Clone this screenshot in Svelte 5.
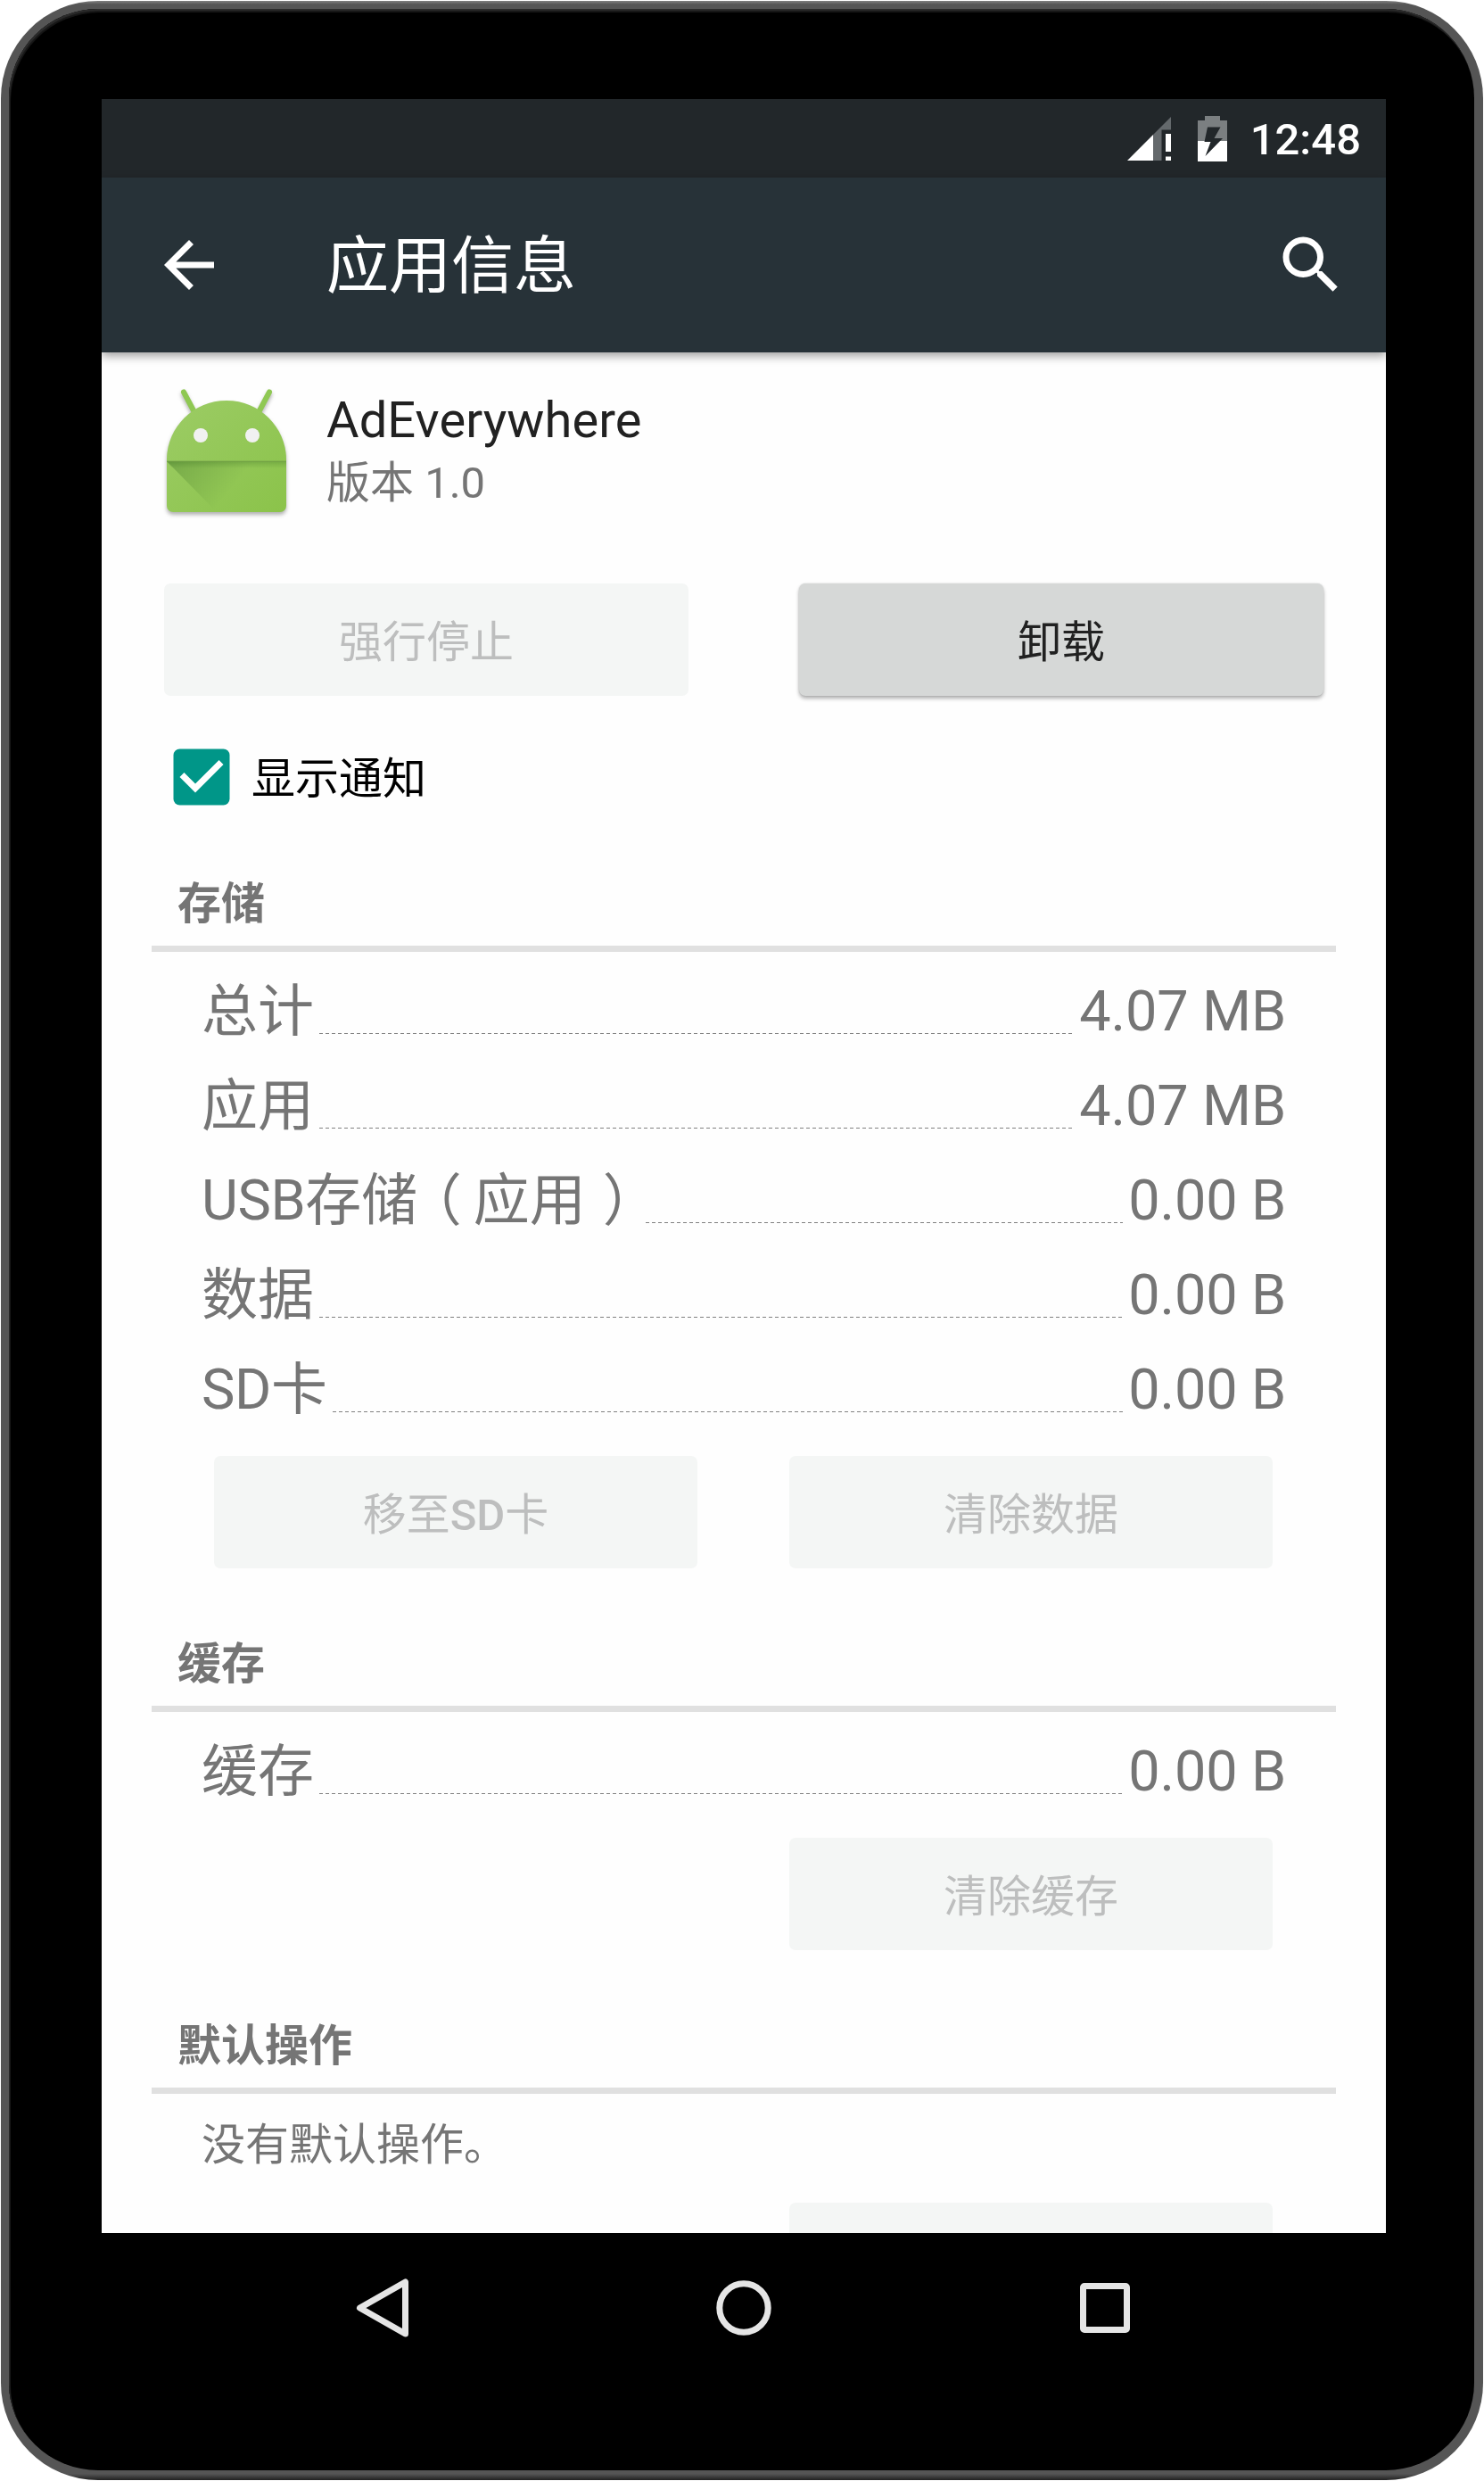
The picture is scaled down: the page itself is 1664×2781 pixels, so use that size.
<script>
  const storage = [
    { label: '总计', value: '4.07 MB' },
    { label: '应用', value: '4.07 MB' },
    { latin: 'USB', label: '存储', note: '应用', value: '0.00 B' },
    { label: '数据', value: '0.00 B' },
    { latin: 'SD', label: '卡', value: '0.00 B' }
  ];
  const cache = [{ label: '缓存', value: '0.00 B' }];
</script>

{#snippet rows(items)}
  {#each items as item}
    <div class="row">
      <span class="label">{#if item.latin}<span class="prefix">{item.latin}</span>{/if}{item.label}{#if item.note}<span class="open">（</span>{item.note}<span class="close">）</span>{/if}</span>
      <span class="leader"></span>
      <span class="value">{item.value}</span>
    </div>
  {/each}
{/snippet}

<div class="device">
  <div class="screen">
    <div class="status">
      <svg class="signal" viewBox="0 0 49 49" aria-hidden="true">
        <path fill="#64696c" d="M49 0V14.5H38.5V49H29V20z" />
        <path fill="#fff" d="M0 49 29 20V49zM43 19h6v20h-6zM43 44.5h6V49h-6z" />
      </svg>
      <svg class="battery" viewBox="0 0 33 51" aria-hidden="true">
        <path fill="#7b7f81" d="M8 0H25V5H33V28H0V5H8z" />
        <path fill="#fff" d="M0 28H33V51H0z" />
        <path fill="#22272a" d="M11 12.5H25.5L18.5 25H28L8.500 45 14.500 29H7.500z" />
      </svg>
      <span class="clock">12:48</span>
    </div>

    <header class="appbar">
      <svg class="icon" viewBox="0 0 24 24" aria-hidden="true">
        <path d="M20 11H7.830l5.590-5.590L12 4l-8 8 8 8 1.410-1.410L7.830 13H20z" />
      </svg>
      <h1>应用信息</h1>
      <svg class="icon" viewBox="0 0 24 24" aria-hidden="true">
        <path d="M15.500 14h-.790l-.280-.270A6.471 6.471 0 0 0 16 9.500 6.500 6.500 0 1 0 9.500 16c1.610 0 3.090-.590 4.230-1.570l.270.280v.790l5 4.990L20.490 19zm-6 0C7.010 14 5 11.990 5 9.500S7.010 5 9.500 5 14 7.010 14 9.500 11.990 14 9.500 14z" />
      </svg>
    </header>

    <main>
      <div class="app">
        <svg class="robot" viewBox="0 0 168 168" aria-hidden="true">
          <defs>
            <linearGradient id="skin" x1="0" y1="0" x2="1" y2="1">
              <stop offset="0" stop-color="#9ccc65" />
              <stop offset="1" stop-color="#8bc34a" />
            </linearGradient>
            <linearGradient id="fold" x1="0" y1="0" x2="1" y2=".35">
              <stop offset="0" stop-color="#33691e" stop-opacity=".34" />
              <stop offset=".65" stop-color="#33691e" stop-opacity="0" />
            </linearGradient>
            <linearGradient id="crease" x1="0" y1="0" x2="0" y2="1">
              <stop offset="0" stop-color="#33691e" stop-opacity=".28" />
              <stop offset="1" stop-color="#33691e" stop-opacity="0" />
            </linearGradient>
          </defs>
          <g class="robot-body">
            <path d="M36 19.500 49 44M132 19.500 119 44" stroke="#8fc853" stroke-width="6" stroke-linecap="round" />
            <path fill="url(#skin)" d="M17 95C17 60 46 29 84 29S151 60 151 95V147a7 7 0 0 1-7 7H24a7 7 0 0 1-7-7z" />
          </g>
          <path fill="url(#fold)" d="M17 97H151V154H73z" />
          <path fill="url(#crease)" d="M17 97H151V105H23z" />
          <path fill="#6f9c45" d="M17 96.500H151V98H17z" opacity=".6" />
          <circle cx="55" cy="68" r="8" fill="#f1f1f1" />
          <circle cx="113" cy="68" r="8" fill="#f1f1f1" />
        </svg>
        <div class="app-text">
          <div class="name">AdEverywhere</div>
          <div class="version">版本 1.0</div>
        </div>
      </div>

      <div class="actions">
        <button disabled>强行停止</button>
        <button class="raised">卸载</button>
      </div>

      <div class="notify">
        <svg viewBox="0 0 24 24" aria-hidden="true">
          <rect x="3" y="3" width="18" height="18" rx="2" fill="#009688" />
          <path fill="#fff" d="M10 17l-5-5 1.410-1.410L10 14.170l7.590-7.590L19 8z" />
        </svg>
        <span>显示通知</span>
      </div>

      <section>
        <h2>存储</h2>
        {@render rows(storage)}
        <div class="buttons">
          <button disabled>移至<span class="latin">SD</span>卡</button>
          <button disabled>清除数据</button>
        </div>
      </section>

      <section>
        <h2>缓存</h2>
        {@render rows(cache)}
        <div class="buttons">
          <button disabled>清除缓存</button>
        </div>
      </section>

      <section>
        <h2>默认操作</h2>
        <p>没有默认操作。</p>
        <div class="buttons">
          <button disabled aria-label="清除默认操作"></button>
        </div>
      </section>
    </main>
  </div>

  <nav>
    <svg viewBox="0 0 84 84" aria-hidden="true">
      <path d="M67.500 13V71L16.500 42z" />
    </svg>
    <svg viewBox="0 0 84 84" aria-hidden="true">
      <circle cx="42" cy="42" r="27.200" />
    </svg>
    <svg viewBox="0 0 84 84" aria-hidden="true">
      <rect x="17.500" y="17.500" width="49" height="49" rx="1.500" />
    </svg>
  </nav>
</div>

<style>
  :global(body) {
    margin: 0;
    background: #fff;
  }

  .device {
    box-sizing: border-box;
    width: 1662px;
    height: 2779px;
    margin: 1px;
    overflow: hidden;
    padding: 101px 99px 0 104px;
    border: solid transparent;
    border-width: 9px 10px 11px 9px;
    border-radius: 109px;
    background:
      linear-gradient(#000, #000) padding-box,
      linear-gradient(#808080, #555 4px, #555 2772px, #222 2779px) border-box;
    box-shadow:
      inset 1px 2px 1px #2c2c2c,
      inset 2px 4px 0 #161616;
    font-family: Roboto, 'Noto Sans CJK SC', sans-serif;
  }

  .screen {
    width: 1440px;
    height: 2392px;
    overflow: hidden;
    background: #fefefe;
  }

  .status {
    display: flex;
    box-sizing: border-box;
    height: 88px;
    padding-right: 28px;
    align-items: center;
    justify-content: flex-end;
    background: #22272a;
  }

  .signal {
    width: 49px;
    height: 49px;
    margin-right: 30px;
  }

  .battery {
    width: 33px;
    height: 51px;
    margin-right: 26px;
  }

  .clock {
    padding-top: 4px;
    color: #fff;
    font-size: 49px;
    font-weight: 500;
    line-height: 58px;
  }

  .appbar {
    display: flex;
    box-sizing: border-box;
    height: 196px;
    padding: 0 42px 0 56px;
    align-items: center;
    background: #273238;
    box-shadow: 0 4px 10px rgba(0, 0, 0, 0.38);
  }

  .icon {
    width: 84px;
    height: 84px;
    fill: #fff;
  }

  h1 {
    flex: 1;
    margin: 0 0 0 112px;
    padding-top: 4px;
    color: #fff;
    font-size: 70px;
    font-weight: 400;
    line-height: 84px;
  }

  .app {
    display: flex;
    height: 168px;
    padding: 25px 56px 0;
  }

  .robot {
    width: 168px;
    height: 168px;
    fill: none;
  }

  .robot-body {
    filter: drop-shadow(0 3px 2px rgba(0, 0, 0, 0.3));
  }

  .app-text {
    padding: 18px 0 0 28px;
  }

  .name {
    color: #212121;
    font-size: 56px;
    letter-spacing: 0.1px;
    line-height: 66px;
  }

  .version {
    color: #757575;
    font-size: 49px;
    line-height: 76px;
  }

  button {
    width: 542px;
    height: 126px;
    padding: 7px 0 0;
    border: 0;
    border-radius: 7px;
    background: #f4f6f5;
    color: #bdbebe;
    font: 400 49px/58px Roboto, 'Noto Sans CJK SC', sans-serif;
  }

  .actions {
    display: flex;
    padding: 66px 70px 0;
    justify-content: space-between;
  }

  .actions button {
    width: 588px;
  }

  .actions .raised {
    background: #d6d8d7;
    color: #212121;
    box-shadow: 0 3px 4px rgba(0, 0, 0, 0.3), 0 0 2px rgba(0, 0, 0, 0.15);
  }

  .latin {
    font-weight: 500;
  }

  .notify {
    display: flex;
    height: 84px;
    padding: 49px 70px 0;
    align-items: center;
    color: #000;
    font-size: 49px;
    line-height: 58px;
  }

  .notify svg {
    width: 84px;
    height: 84px;
    margin-right: 14px;
  }

  .notify span {
    padding-top: 6px;
  }

  section {
    padding: 0 56px;
  }

  h2 {
    box-sizing: border-box;
    height: 154px;
    margin: 0;
    padding: 72px 29px 0;
    border-bottom: 7px solid #e0e0e0;
    color: #757575;
    font-size: 49px;
    font-weight: 700;
    line-height: 58px;
  }

  .row {
    display: flex;
    height: 106px;
    padding: 0 56px;
    color: #757575;
    font-size: 63px;
    line-height: 134px;
    white-space: nowrap;
  }

  .label {
    flex: none;
  }

  .prefix {
    letter-spacing: -0.4px;
  }

  .value {
    letter-spacing: -0.15px;
  }

  /* Half-width brackets, padded so that they sit in the middle of a full cell. */
  .open,
  .close {
    font-feature-settings: 'halt' 1;
  }

  .open {
    padding: 0 13px 0 18px;
  }

  .close {
    padding: 0 11px 0 19px;
  }

  .leader {
    flex: 1;
    height: 1px;
    margin: 91px 6px 0 6px;
    background: repeating-linear-gradient(90deg, #808080 0 4px, transparent 4px 7px);
  }

  .buttons {
    display: flex;
    padding: 35px 71px 7px 70px;
    justify-content: space-between;
  }

  .buttons button:only-child {
    margin-left: auto;
  }

  p {
    height: 58px;
    margin: 0;
    padding: 29px 56px 0;
    color: #757575;
    font-size: 49px;
    line-height: 58px;
  }

  nav {
    display: flex;
    height: 168px;
    padding: 0 273px;
    align-items: center;
    justify-content: space-between;
  }

  nav svg {
    width: 84px;
    height: 84px;
    fill: none;
    stroke: #e5e5e5;
    stroke-width: 7;
    stroke-linejoin: round;
  }
</style>
